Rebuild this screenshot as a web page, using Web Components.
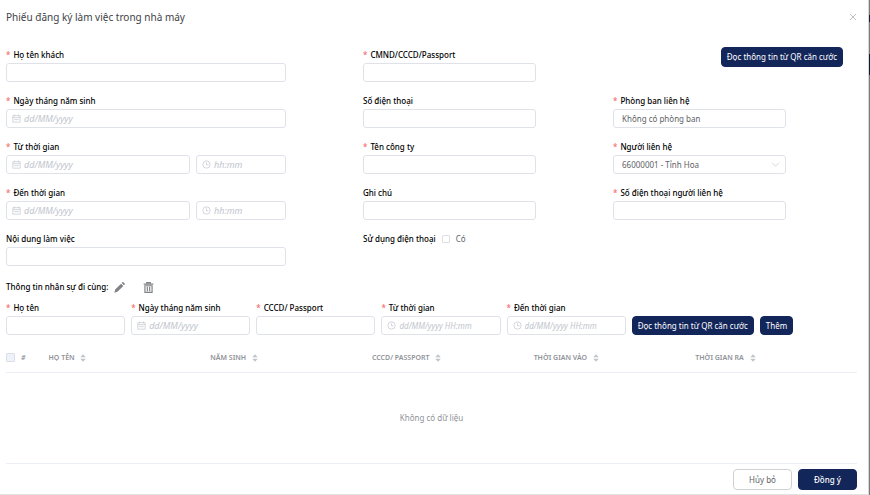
<!DOCTYPE html>
<html lang="vi">
<head>
<meta charset="utf-8">
<meta name="viewport" content="width=device-width, initial-scale=1">
<title>Phiếu đăng ký làm việc trong nhà máy</title>
<style>
  body {
    margin: 0;
    background: #8b8b8d;
    color: #606266;
    font: 8px/16px "Noto Sans", "Liberation Sans", sans-serif;
  }
</style>
</head>
<body>
<visit-dialog></visit-dialog>

<script>
const ICONS = {
  date: '<path d="M1.500 3h13v11.500h-13zM1.500 6.500h13M4.500 1v3M11.500 1v3M4 10h8"/>',
  time: '<circle cx="8" cy="8" r="6.500"/><path d="M8 4v4.500h3.500"/>',
  close: '<path d="M2 2l12 12M14 2L2 14"/>',
  down: '<path d="M2 5l6 6 6-6"/>',
  edit: '<path d="M0.500 15.500l1.200-4.500 8.600-8.600 3.300 3.300L5 14.300zM11.200 1.500l1-1c.5-.5 1-.5 1.500 0l1.800 1.800c.5.500.5 1 0 1.500l-1 1z" fill="currentColor" stroke="none"/>',
  trash: '<path d="M1 3h14M5.500 2.500V1h5v1.500M2.800 5.500v9.500h10.400V5.500zM6.300 7v6.500M9.700 7v6.500" stroke-width="1.700"/>',
  sort: '<path d="M8 0.500l5.500 6h-11zM8 15.500l5.500-6h-11z" fill="currentColor" stroke="none"/>'
}

class UiIcon extends HTMLElement {
  constructor() {
    super()
    this.attachShadow({ mode: 'open' })
  }

  connectedCallback() {
    this.shadowRoot.innerHTML = `
    <style>
    :host { display: inline-block; width: 9px; height: 9px; flex: none; }
    svg { display: block; width: 100%; height: 100%; fill: none; stroke: currentColor; stroke-width: 1.2; }
    </style>
    <svg viewBox="0 0 16 16" aria-hidden="true">${ICONS[this.getAttribute('name')] || ''}</svg>
    `
  }
}
customElements.define('ui-icon', UiIcon)

class UiButton extends HTMLElement {
  constructor() {
    super()
    this.attachShadow({ mode: 'open' })
  }

  connectedCallback() {
    this.shadowRoot.innerHTML = `
    <style>
    :host { display: inline-block; }
    button {
      display: block;
      box-sizing: border-box;
      width: 100%;
      min-height: var(--button-height, 20px);
      padding: 0 5px;
      border: 1px solid #13265a;
      border-radius: 4px;
      background: #13265a;
      color: #fff;
      font: inherit;
      white-space: nowrap;
      cursor: pointer;
    }
    :host([plain]) button { border-color: #cfd1d4; background: #fff; color: #606266; }
    :host([strong]) button { font-weight: 500; }
    </style>
    <button type="button"><slot></slot></button>
    `
  }
}
customElements.define('ui-button', UiButton)

// types: text, date, time, datetime, range (date + time), select, check
class FormField extends HTMLElement {
  constructor() {
    super()
    this.attachShadow({ mode: 'open' })
  }

  box(id, kind) {
    const hints = { date: 'dd/MM/yyyy', time: 'hh:mm', datetime: 'dd/MM/yyyy HH:mm' }
    const icon = kind === 'datetime' ? 'time' : kind
    const aria = id === 'extra' ? `aria-label="${this.getAttribute('label')} - giờ"` : ''
    return `
    <div class="box ${kind}">
      ${hints[kind] ? `<ui-icon name="${icon}"></ui-icon>` : ''}
      <input id="${id}" type="text" ${aria} placeholder="${hints[kind] || ''}" value="${this.getAttribute('value') || ''}">
    </div>`
  }

  control(type) {
    const value = this.getAttribute('value') || ''
    if (type === 'range') {
      return this.box('main', 'date') + this.box('extra', 'time')
    }
    if (type === 'select') {
      return `<div class="box"><select id="main"><option>${value}</option></select><ui-icon name="down"></ui-icon></div>`
    }
    return this.box('main', type)
  }

  connectedCallback() {
    const type = this.getAttribute('type') || 'text'
    const label = this.getAttribute('label')
    this.shadowRoot.innerHTML = `
    <style>
    :host { display: block; min-width: 0; }
    label { display: block; color: #000; font-weight: 500; white-space: nowrap; }
    :host([required]) label::before { content: "*"; margin-right: 3px; color: #f56c6c; }
    .row { display: grid; gap: 6px; }
    .range { grid-template-columns: 184fr 90fr; }
    .box {
      display: flex;
      align-items: center;
      min-width: 0;
      box-sizing: border-box;
      height: 19px;
      padding: 0 5px;
      border: 1px solid #e0e2e9;
      border-radius: 3px;
      background: #fff;
      color: #c0c4cc;
    }
    input, select {
      flex: 1;
      min-width: 0;
      width: 100%;
      padding: 0 3px;
      border: 0;
      outline: 0;
      background: none;
      color: #606266;
      font: inherit;
      appearance: none;
    }
    ::placeholder { color: #c0c4cc; font-style: italic; opacity: 1; }
    .date ::placeholder, .time ::placeholder { font-size: 9px; }
    .check { display: flex; align-items: center; }
    .check .value { color: #606266; font-weight: 400; }
    .check input {
      flex: none;
      width: 8px;
      height: 8px;
      margin: 0;
      padding: 0;
      border: 1px solid #dcdfe6;
      border-radius: 1px;
    }
    </style>
    ${type === 'check' ? `
    <div class="row check">
      <label for="main">${label}</label>
      <input id="main" type="checkbox">
      <label class="value" for="main">${this.getAttribute('value')}</label>
    </div>` : `
    <label for="main">${label}</label>
    <div class="row ${type}">${this.control(type)}</div>`}
    `
  }
}
customElements.define('form-field', FormField)

class CompanionTable extends HTMLElement {
  columns = ['Họ tên', 'Năm sinh', 'CCCD/ Passport', 'Thời gian vào', 'Thời gian ra']
  constructor() {
    super()
    this.attachShadow({ mode: 'open' })
  }

  connectedCallback() {
    this.shadowRoot.innerHTML = `
    <style>
    :host { display: block; }
    table { width: 100%; border-collapse: collapse; table-layout: fixed; }
    th {
      height: 29px;
      padding: 0;
      border-bottom: 1px solid #ebeef5;
      color: #909399;
      font-size: 7px;
      font-weight: 600;
      text-align: left;
      text-transform: uppercase;
      white-space: nowrap;
    }
    .pick { width: 15px; }
    .data { width: 19%; }
    input {
      display: block;
      appearance: none;
      width: 9px;
      height: 9px;
      margin: 0;
      border: 1px solid #dcdfe6;
      border-radius: 1px;
      background: #edf2fc;
    }
    .order { font-style: italic; }
    ui-icon { width: 8px; height: 8px; margin-left: 3px; color: #c0c4cc; vertical-align: middle; }
    td { height: 90px; padding: 0; border-bottom: 1px solid #ebeef5; color: #909399; text-align: center; }
    </style>
    <table>
      <thead>
        <tr>
          <th class="pick"><input type="checkbox" disabled aria-label="Chọn tất cả"></th>
          <th class="order">#</th>
          ${this.columns.map(name => `<th class="data">${name} <ui-icon name="sort"></ui-icon></th>`).join('')}
        </tr>
      </thead>
      <tbody>
        <tr><td colspan="7">Không có dữ liệu</td></tr>
      </tbody>
    </table>
    `
  }
}
customElements.define('companion-table', CompanionTable)

class VisitDialog extends HTMLElement {
  constructor() {
    super()
    this.attachShadow({ mode: 'open' })
  }

  connectedCallback() {
    this.shadowRoot.innerHTML = `
    <style>
    :host {
      display: block;
      padding-right: 1px;
      background: linear-gradient(#7b7b7d 15px, #15213f 15px 22px, #7b7b7d 22px 54px, #0d1a3a 54px 75px, #7b7b7d 75px);
    }
    section {
      padding: 0 11px 4px 6px;
      border-right: 1px solid #d8d8d8;
      border-bottom: 1px solid #e2e2e2;
      background: #fff;
    }
    header { display: flex; align-items: center; justify-content: space-between; height: 33px; }
    h1 { margin: 0; color: #404246; font-size: 10px; font-weight: 400; }
    header button { display: flex; padding: 0; border: 0; background: none; color: #909399; cursor: pointer; }
    header ui-icon { width: 8px; height: 8px; }
    .visitor {
      display: grid;
      grid-template-columns: 357fr 250fr 244fr;
      grid-auto-rows: 35px;
      row-gap: 11px;
      padding-top: 14px;
    }
    .visitor form-field { width: 71%; }
    .visitor .wide { width: auto; margin-right: 77px; }
    .visitor .mid { width: 69%; }
    .visitor ui-button { justify-self: end; align-self: start; margin-right: 14px; --button-height: 20px; }
    .companions { display: flex; align-items: center; height: 20px; padding-top: 11px; color: #000; font-weight: 500; }
    .companions button { display: flex; margin-left: 6px; padding: 0; border: 0; background: none; color: #808287; cursor: pointer; }
    .companions button + button { margin-left: 18px; }
    .companions ui-icon { width: 11px; height: 11px; }
    .adder { display: flex; align-items: flex-end; gap: 6px; padding-top: 3px; }
    .adder form-field { flex: 0 0 14%; }
    .adder ui-button { --button-height: 19px; }
    companion-table { margin-top: 8px; }
    footer { display: flex; justify-content: flex-end; gap: 6px; padding-top: 5px; }
    footer ui-button { width: 59px; --button-height: 21px; }
    </style>
    <section role="dialog" aria-labelledby="title">
      <header>
        <h1 id="title">Phiếu đăng ký làm việc trong nhà máy</h1>
        <button type="button" aria-label="Đóng"><ui-icon name="close"></ui-icon></button>
      </header>
      <div class="visitor">
        <form-field class="wide" label="Họ tên khách" required></form-field>
        <form-field class="mid" label="CMND/CCCD/Passport" required></form-field>
        <ui-button>Đọc thông tin từ QR căn cước</ui-button>

        <form-field class="wide" type="date" label="Ngày tháng năm sinh" required></form-field>
        <form-field class="mid" label="Số điện thoại"></form-field>
        <form-field label="Phòng ban liên hệ" value="Không có phòng ban" required></form-field>

        <form-field class="wide" type="range" label="Từ thời gian" required></form-field>
        <form-field class="mid" label="Tên công ty" required></form-field>
        <form-field type="select" label="Người liên hệ" value="66000001 - Tỉnh Hoa" required></form-field>

        <form-field class="wide" type="range" label="Đến thời gian" required></form-field>
        <form-field class="mid" label="Ghi chú"></form-field>
        <form-field label="Số điện thoại người liên hệ" required></form-field>

        <form-field class="wide" label="Nội dung làm việc"></form-field>
        <form-field class="mid" type="check" label="Sử dụng điện thoại" value="Có"></form-field>
      </div>
      <div class="companions">
        Thông tin nhân sự đi cùng:
        <button type="button" aria-label="Sửa"><ui-icon name="edit"></ui-icon></button>
        <button type="button" aria-label="Xóa"><ui-icon name="trash"></ui-icon></button>
      </div>
      <div class="adder">
        <form-field label="Họ tên" required></form-field>
        <form-field type="date" label="Ngày tháng năm sinh" required></form-field>
        <form-field label="CCCD/ Passport" required></form-field>
        <form-field type="datetime" label="Từ thời gian" required></form-field>
        <form-field type="datetime" label="Đến thời gian" required></form-field>
        <ui-button>Đọc thông tin từ QR căn cước</ui-button>
        <ui-button>Thêm</ui-button>
      </div>
      <companion-table></companion-table>
      <footer>
        <ui-button plain>Hủy bỏ</ui-button>
        <ui-button strong>Đồng ý</ui-button>
      </footer>
    </section>
    `
  }
}
customElements.define('visit-dialog', VisitDialog)
</script>
</body>
</html>
